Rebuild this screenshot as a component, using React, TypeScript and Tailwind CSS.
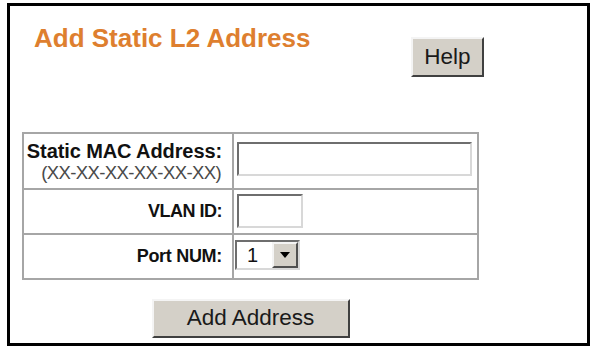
import React from "react";

const font = { fontFamily: '"Liberation Sans", Arial, sans-serif' };

function Btn({ label, className }: { label: string; className: string }) {
  return (
    <div
      className={
        "flex items-center justify-center bg-[#d4d0c8] border-2 border-t-[#f4f4f4] border-l-[#f4f4f4] border-r-[#404040] border-b-[#404040] text-[#1a1a1a] text-[22.5px] leading-none " +
        className
      }
    >
      {label}
    </div>
  );
}

export default function App() {
  return (
    <div className="w-[593px] h-[348px] bg-white overflow-hidden" style={font}>
      <div className="ml-[7px] mt-[3px] w-[583px] h-[343px] border-[3px] border-black flex flex-col">
        <div className="h-[126px] flex items-start">
          <div className="ml-[24px] mt-[17px] w-[377px] text-[26px] leading-[30px] font-bold text-[#de7f2f]">
            Add Static L2 Address
          </div>
          <Btn label="Help" className="mt-[31px] w-[73px] h-[40px]" />
        </div>
        <div className="ml-[12px] w-[457px] flex flex-col">
          <div className="border-2 border-[#a6a6a6] bg-[#a6a6a6] grid grid-cols-[208px_243px] gap-[2px]">
            <div className="bg-white h-[54px] flex flex-col items-end justify-center pr-[10px]">
              <div className="text-[20px] leading-[22px] font-bold text-[#111] tracking-[-0.1px]">Static MAC Address:</div>
              <div className="text-[18.5px] leading-[21px] text-[#4a4a4a] tracking-[-0.6px] mr-[1px]">(XX-XX-XX-XX-XX-XX)</div>
            </div>
            <div className="bg-white h-[54px] flex items-start pt-[8px] pl-[3px]">
              <div className="w-[235px] h-[34px] bg-white border-2 border-t-[#6e6e6e] border-l-[#6e6e6e] border-r-[#d8d8d8] border-b-[#d8d8d8]" />
            </div>
            <div className="bg-white h-[43px] flex items-center justify-end pr-[10px]">
              <div className="text-[18px] font-bold text-[#111] tracking-[-0.5px]">VLAN ID:</div>
            </div>
            <div className="bg-white h-[43px] flex items-start pt-[4px] pl-[3px]">
              <div className="w-[66px] h-[34px] bg-white border-2 border-t-[#6e6e6e] border-l-[#6e6e6e] border-r-[#d8d8d8] border-b-[#d8d8d8]" />
            </div>
            <div className="bg-white h-[43px] flex items-center justify-end pr-[10px]">
              <div className="text-[18px] font-bold text-[#111] tracking-[-0.3px]">Port NUM:</div>
            </div>
            <div className="bg-white h-[43px] flex items-start pt-[5px] pl-[1px]">
              <div className="w-[65px] h-[30px] bg-white border-2 border-t-[#6e6e6e] border-l-[#6e6e6e] border-r-[#d8d8d8] border-b-[#d8d8d8] flex items-center">
                <div className="flex-1 pl-[10px] text-[20px] leading-none text-[#111]">1</div>
                <div className="w-[26px] h-full bg-[#d4d0c8] border-2 border-t-[#f4f4f4] border-l-[#f4f4f4] border-r-[#505050] border-b-[#505050] flex items-center justify-center">
                  <svg width="10" height="6" viewBox="0 0 10 6">
                    <polygon points="0,0 10,0 5,6" fill="#000" />
                  </svg>
                </div>
              </div>
            </div>
          </div>
          <div className="flex justify-center mt-[19px]">
            <Btn label="Add Address" className="w-[198px] h-[39px]" />
          </div>
        </div>
      </div>
    </div>
  );
}
